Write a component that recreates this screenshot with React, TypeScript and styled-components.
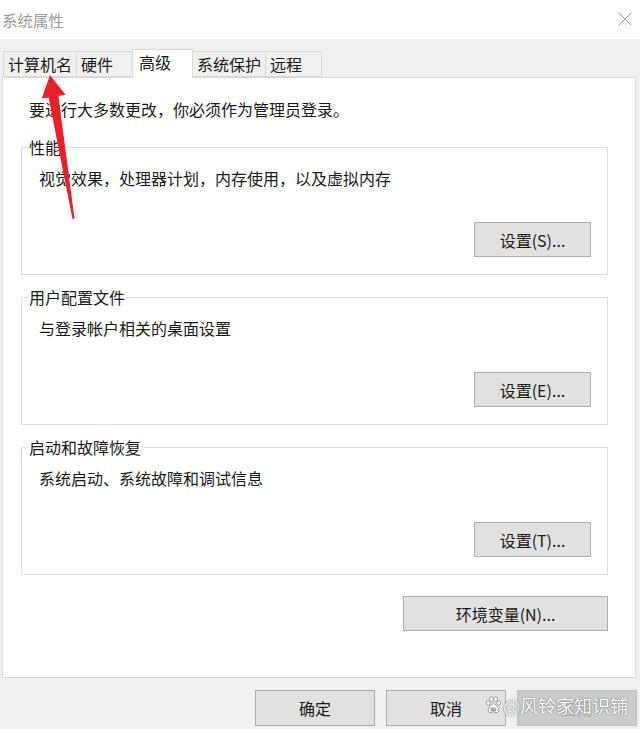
import React, { FC } from "react";
import styled, { createGlobalStyle } from "styled-components";

const GlobalStyle = createGlobalStyle`
  html, body {
    margin: 0;
    padding: 0;
    background: #f0f0f0;
  }
  * {
    box-sizing: border-box;
  }
`;

const FONT = `"Noto Sans CJK SC", "Microsoft YaHei", sans-serif`;

const Window = styled.div`
  position: relative;
  width: 640px;
  height: 729px;
  display: flex;
  flex-direction: column;
  background: #f0f0f0;
  font-family: ${FONT};
  font-size: 16px;
  color: #1a1a1a;
  overflow: hidden;
`;

const TitleBar = styled.div`
  height: 39px;
  flex: none;
  display: flex;
  align-items: center;
  justify-content: space-between;
  background: #fff;
  padding: 0 8px 0 2px;
`;

const Title = styled.span`
  font-size: 15.5px;
  color: #9a9a9a;
  line-height: 20px;
  margin-top: 1px;
`;

const CloseButton = styled.span`
  display: flex;
  width: 14px;
  height: 14px;
  margin-top: -1px;
`;

const Body = styled.div`
  flex: 1;
  display: flex;
  flex-direction: column;
  padding-top: 10px;
`;

const TabStrip = styled.div`
  display: flex;
  align-items: flex-end;
  height: 28px;
  padding-left: 3px;
  position: relative;
  z-index: 1;
`;

const Tab = styled.div<{ $active?: boolean }>`
  min-width: ${(p) => (p.$active ? 61 : 57)}px;
  height: ${(p) => (p.$active ? 29 : 26)}px;
  margin-right: -1px;
  margin-bottom: ${(p) => (p.$active ? -1 : 0)}px;
  padding: 0 ${(p) => (p.$active ? 6 : 4)}px;
  border: 1px solid #d9d9d9;
  border-bottom: ${(p) => (p.$active ? "none" : "1px solid #d9d9d9")};
  background: ${(p) => (p.$active ? "#fff" : "#f0f0f0")};
  line-height: 25px;
  white-space: nowrap;
  position: relative;
  z-index: ${(p) => (p.$active ? 2 : 1)};
`;

const Panel = styled.div`
  height: 601px;
  margin: 0 4px 0 2px;
  background: #fff;
  border: 1px solid #d9d9d9;
  padding: 21px 0 0 18px;
  display: flex;
  flex-direction: column;
`;

const Notice = styled.div`
  line-height: 20px;
  padding-left: 8px;
  margin-bottom: 18px;
`;

const GroupBox = styled.fieldset`
  width: 587px;
  margin: 0 0 12px;
  padding: 0 16px 17px 0;
  border: 1px solid #dcdcdc;
  display: flex;
  flex-direction: column;
  min-width: 0;
`;

const Legend = styled.legend`
  margin-left: 6px;
  padding: 0 1px;
  line-height: 20px;
`;

const Description = styled.div`
  line-height: 20px;
  margin: 11px 0 34px 17px;
`;

const Button = styled.button<{ $width?: number; $height?: number; $disabled?: boolean }>`
  width: ${(p) => p.$width ?? 117}px;
  height: ${(p) => p.$height ?? 35}px;
  align-self: flex-end;
  background: ${(p) => (p.$disabled ? "#cccccc" : "#e1e1e1")};
  border: 1px solid ${(p) => (p.$disabled ? "#bfbfbf" : "#adadad")};
  border-radius: 0;
  font-family: ${FONT};
  font-size: 16px;
  color: ${(p) => (p.$disabled ? "#b0b0b0" : "#1a1a1a")};
  padding: 0;
  line-height: 20px;
`;

const EnvRow = styled.div`
  width: 587px;
  display: flex;
  justify-content: flex-end;
  margin-top: 9px;
`;

const Footer = styled.div`
  position: relative;
  display: flex;
  justify-content: flex-end;
  gap: 11px;
  padding: 12px 3px 0 0;
`;

const Watermark = styled.div`
  position: absolute;
  right: 12px;
  top: 15px;
  display: flex;
  align-items: center;
  gap: 1px;
  font-size: 18px;
  line-height: 24px;
  color: #fff;
  text-shadow: 0 0 1px #6e6e6e, 0 0 2px #8a8a8a;
  pointer-events: none;
`;

const ArrowLayer = styled.svg`
  position: absolute;
  left: 0;
  top: 0;
  pointer-events: none;
  z-index: 5;
`;

const tabs = ["计算机名", "硬件", "高级", "系统保护", "远程"];

const groups = [
  { title: "性能", text: "视觉效果，处理器计划，内存使用，以及虚拟内存", button: "设置(S)..." },
  { title: "用户配置文件", text: "与登录帐户相关的桌面设置", button: "设置(E)..." },
  { title: "启动和故障恢复", text: "系统启动、系统故障和调试信息", button: "设置(T)..." },
];

const Paw: FC = () => (
  <svg width="17" height="18" viewBox="0 0 16 17">
    <g fill="#fff" stroke="#8a8a8a" strokeWidth="0.8">
      <ellipse cx="3" cy="6.5" rx="1.8" ry="2.2" />
      <ellipse cx="6" cy="3" rx="1.8" ry="2.2" />
      <ellipse cx="10" cy="3" rx="1.8" ry="2.2" />
      <ellipse cx="13" cy="6.5" rx="1.8" ry="2.2" />
      <path d="M8 7.5c-2.5 0-5 3.5-5 6 0 1.5 1.3 2.3 2.6 2.1 1-.2 1.6-.6 2.4-.6s1.4.4 2.4.6c1.3.2 2.6-.6 2.6-2.1 0-2.5-2.5-6-5-6z" />
    </g>
    <text x="8" y="14.5" fontSize="4.5" textAnchor="middle" fill="#8a8a8a" fontFamily="Liberation Sans, sans-serif">du</text>
  </svg>
);

const App: FC = () => {
  return (
    <>
      <GlobalStyle />
      <Window>
        <TitleBar>
          <Title>系统属性</Title>
          <CloseButton>
            <svg width="14" height="14" viewBox="0 0 14 14">
              <path d="M0.5 0.5L13.5 13.5M13.5 0.5L0.5 13.5" stroke="#9a9a9a" strokeWidth="1" fill="none" />
            </svg>
          </CloseButton>
        </TitleBar>
        <Body>
          <TabStrip>
            {tabs.map((t) => (
              <Tab key={t} $active={t === "高级"}>
                {t}
              </Tab>
            ))}
          </TabStrip>
          <Panel>
            <Notice>要进行大多数更改，你必须作为管理员登录。</Notice>
            {groups.map((g) => (
              <GroupBox key={g.title}>
                <Legend>{g.title}</Legend>
                <Description>{g.text}</Description>
                <Button>{g.button}</Button>
              </GroupBox>
            ))}
            <EnvRow>
              <Button $width={205}>环境变量(N)...</Button>
            </EnvRow>
          </Panel>
          <Footer>
            <Button $width={120} $height={36}>确定</Button>
            <Button $width={120} $height={36}>取消</Button>
            <Button $width={120} $height={36} $disabled>应用</Button>
            <Watermark>
              <Paw />
              <span>@风铃家知识铺</span>
            </Watermark>
          </Footer>
        </Body>
        <ArrowLayer width="640" height="729" viewBox="0 0 640 729">
          <polygon
            points="50,75 65.5,94.8 58.4,95.9 74.5,218.5 72.5,219 48.6,97.5 41.7,98.6"
            fill="#e8202a"
          />
        </ArrowLayer>
      </Window>
    </>
  );
};

export default App;
